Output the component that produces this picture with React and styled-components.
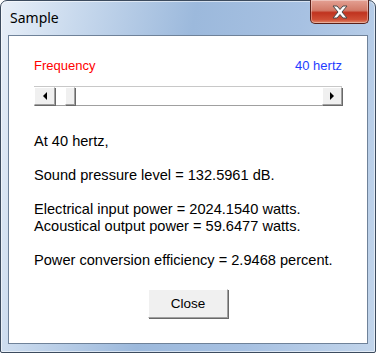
import React from 'react';
import styled, { createGlobalStyle } from 'styled-components';

const GlobalStyle = createGlobalStyle`
  * { box-sizing: border-box; }
  html, body { margin: 0; padding: 0; background: #ffffff; }
  #root { width: 376px; height: 353px; }
`;

const Window = styled.div`
  width: 376px;
  height: 353px;
  display: flex;
  flex-direction: column;
  padding: 0 7px 8px 7px;
  border: 1px solid #3c4b5e;
  border-radius: 7px 7px 2px 2px;
  background: linear-gradient(100deg, #e8eff8 0%, #c8d9ed 18%, #9cb9dc 45%, #a7c1e2 70%, #c2d5eb 100%);
  box-shadow: inset 0 0 0 1px rgba(255, 255, 255, 0.55);
`;

const TitleBar = styled.div`
  height: 34px;
  display: flex;
  align-items: flex-start;
  justify-content: space-between;
`;

const Title = styled.div`
  margin-top: 8px;
  padding-left: 2px;
  font-family: 'Noto Sans', 'Open Sans', sans-serif;
  font-size: 14px;
  color: #000000;
  line-height: 18px;
`;

const CloseCaption = styled.div`
  width: 59px;
  height: 24px;
  margin-top: -1px;
  margin-right: -1px;
  border: 1px solid #5a2018;
  border-top: none;
  border-radius: 0 0 5px 5px;
  background: linear-gradient(to bottom, #e4a194 0%, #d27a68 45%, #c0331f 55%, #cf4e35 85%, #e08a6c 100%);
  box-shadow: inset 0 0 0 1px rgba(255, 255, 255, 0.35);
  display: flex;
  align-items: center;
  justify-content: center;
`;

const Client = styled.div`
  flex: 1;
  display: flex;
  flex-direction: column;
  background: #ffffff;
  border: 1px solid #6f8299;
  padding: 22px 25px 0 25px;
  font-family: 'Liberation Sans', Arial, sans-serif;
  font-size: 13px;
`;

const HeaderRow = styled.div`
  display: flex;
  justify-content: space-between;
  line-height: 15px;
`;

const Label = styled.span`
  color: ${p => p.color};
`;

const ScrollBar = styled.div`
  margin-top: 13px;
  height: 20px;
  display: flex;
  background: #ffffff;
  border-top: 1px solid #c8c8c8;
  border-bottom: 1px solid #a0a0a0;
`;

const ScrollButton = styled.div`
  width: ${p => p.width}px;
  height: 100%;
  flex: none;
  background: #f0f0f0;
  border-top: 1px solid #ffffff;
  border-left: 1px solid #ffffff;
  border-right: 1px solid #a0a0a0;
  border-bottom: 1px solid #a0a0a0;
  box-shadow: 1px 1px 0 #696969;
  display: flex;
  align-items: center;
  justify-content: center;
`;

const Track = styled.div`
  width: ${p => p.width}px;
  flex: ${p => (p.width ? 'none' : 1)};
`;

const Arrow = styled.div`
  width: 0;
  height: 0;
  border-top: 4px solid transparent;
  border-bottom: 4px solid transparent;
  ${p => (p.dir === 'left' ? 'border-right: 4px solid #000;' : 'border-left: 4px solid #000;')}
`;

const Report = styled.div`
  margin-top: 27px;
  font-size: 14.6px;
  line-height: 17px;
  color: #000000;
`;

const Line = styled.div`
  height: 17px;
  white-space: pre;
`;

const ButtonRow = styled.div`
  margin-top: 20px;
  display: flex;
  justify-content: center;
`;

const PushButton = styled.button`
  width: 80px;
  height: 29px;
  font-family: 'Liberation Sans', Arial, sans-serif;
  font-size: 13.5px;
  color: #000000;
  background: #f0f0f0;
  border-top: 1px solid #ffffff;
  border-left: 1px solid #ffffff;
  border-right: 1px solid #a0a0a0;
  border-bottom: 1px solid #a0a0a0;
  box-shadow: 1px 1px 0 #696969;
  padding: 0;
`;

const lines = [
  'At 40 hertz,',
  '',
  'Sound pressure level = 132.5961 dB.',
  '',
  'Electrical input power = 2024.1540 watts.',
  'Acoustical output power = 59.6477 watts.',
  '',
  'Power conversion efficiency = 2.9468 percent.',
];

export default function App() {
  return (
    <>
      <GlobalStyle />
      <Window>
        <TitleBar>
          <Title>Sample</Title>
          <CloseCaption>
            <svg width="18" height="14" viewBox="0 0 18 14">
              <path
                d="M2 1 H6 L9 4.5 L12 1 H16 L11 7 L16 13 H12 L9 9.5 L6 13 H2 L7 7 Z"
                fill="#ffffff"
                stroke="#4a4a4a"
                strokeWidth="1"
                strokeLinejoin="round"
              />
            </svg>
          </CloseCaption>
        </TitleBar>
        <Client>
          <HeaderRow>
            <Label color="#ff0000">Frequency</Label>
            <Label color="#1f3dff">40 hertz</Label>
          </HeaderRow>
          <ScrollBar>
            <ScrollButton width={21}>
              <Arrow dir="left" />
            </ScrollButton>
            <Track width={10} />
            <ScrollButton width={10} />
            <Track />
            <ScrollButton width={20}>
              <Arrow dir="right" />
            </ScrollButton>
          </ScrollBar>
          <Report>
            {lines.map((l, i) => (
              <Line key={i}>{l}</Line>
            ))}
          </Report>
          <ButtonRow>
            <PushButton>Close</PushButton>
          </ButtonRow>
        </Client>
      </Window>
    </>
  );
}
